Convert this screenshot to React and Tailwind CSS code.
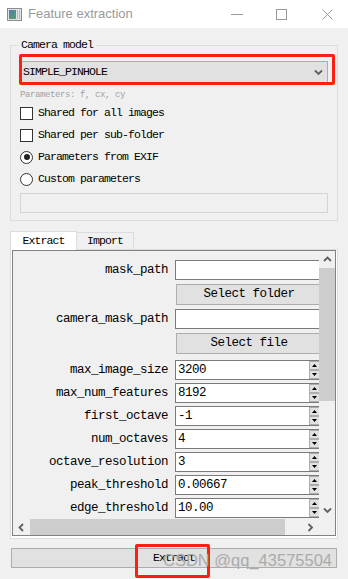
import React from 'react';

const rows = [
  { label: 'max_image_size', value: '3200' },
  { label: 'max_num_features', value: '8192' },
  { label: 'first_octave', value: '-1' },
  { label: 'num_octaves', value: '4' },
  { label: 'octave_resolution', value: '3' },
  { label: 'peak_threshold', value: '0.00667' },
  { label: 'edge_threshold', value: '10.00' },
];

function Chevron({ dir }) {
  const d = {
    up: 'M1 5 L4.5 1.5 L8 5',
    down: 'M1 1.5 L4.5 5 L8 1.5',
    left: 'M5 1 L1.5 4.5 L5 8',
    right: 'M1.5 1 L5 4.5 L1.5 8',
  }[dir];
  const vertical = dir === 'up' || dir === 'down';
  return (
    <svg width={vertical ? 9 : 7} height={vertical ? 7 : 9} viewBox={vertical ? '0 0 9 7' : '0 0 7 9'}>
      <path d={d} fill="none" stroke="#606060" strokeWidth="1.8" />
    </svg>
  );
}

function Tri({ up }) {
  return (
    <svg width="5" height="3" viewBox="0 0 5 3">
      <polygon points={up ? '0,3 2.5,0 5,3' : '0,0 2.5,3 5,0'} fill="#000" />
    </svg>
  );
}

function SpinBox({ value }) {
  return (
    <div className="flex h-[20px] w-[146px] border border-[#7a7a7a] bg-white">
      <div className="flex-1 pl-[2px] leading-[18px]">{value}</div>
      <div className="flex w-[11px] flex-col">
        <div className="flex h-[9px] items-center justify-center border border-[#adadad] bg-[#e1e1e1]">
          <Tri up />
        </div>
        <div className="flex h-[9px] items-center justify-center border border-[#adadad] bg-[#e1e1e1]">
          <Tri />
        </div>
      </div>
    </div>
  );
}

function Row({ label, children, className = '' }) {
  return (
    <div className={`flex items-center ${className}`}>
      <div className="w-[155px] shrink-0 text-right leading-[20px]">{label}</div>
      <div className="ml-[7px] shrink-0">{children}</div>
    </div>
  );
}

function TitleBar() {
  return (
    <div className="flex h-[28px] items-center bg-white font-['Liberation_Sans',Arial,sans-serif] text-[13px] text-[#999999]">
      <svg className="ml-[7px]" width="15" height="13" viewBox="0 0 15 13">
        <defs>
          <linearGradient id="ic" x1="0" y1="0" x2="1" y2="1">
            <stop offset="0" stopColor="#4a7fc0" />
            <stop offset="1" stopColor="#5aa05a" />
          </linearGradient>
        </defs>
        <rect x="0.5" y="0.5" width="14" height="12" fill="#e4e4e4" stroke="#8c8c8c" />
        <rect x="2" y="2" width="7" height="9" fill="url(#ic)" />
        <rect x="10" y="2" width="1" height="9" fill="#b8b8b8" />
        <rect x="12" y="2" width="1" height="9" fill="#b8b8b8" />
      </svg>
      <span className="ml-[6px]">Feature extraction</span>
      <div className="ml-auto flex items-center">
        <svg width="12" height="12" viewBox="0 0 12 12">
          <line x1="0" y1="6.5" x2="12" y2="6.5" stroke="#999" />
        </svg>
        <svg className="ml-[33px]" width="11" height="11" viewBox="0 0 11 11">
          <rect x="0.5" y="0.5" width="10" height="10" fill="none" stroke="#999" />
        </svg>
        <svg className="mr-[15px] ml-[35px]" width="11" height="11" viewBox="0 0 11 11">
          <path d="M0.5 0.5 L10.5 10.5 M10.5 0.5 L0.5 10.5" stroke="#999" />
        </svg>
      </div>
    </div>
  );
}

export default function App() {
  return (
    <div className="relative h-[579px] w-[348px] overflow-hidden bg-[#f0f0f0] font-['Liberation_Mono','DejaVu_Sans_Mono',monospace] text-black">
      <TitleBar />
      <div className="px-[10px]">
        <fieldset className="mt-[11px] border border-[#dcdcdc] px-[9px] pb-[7px]">
          <legend className="-ml-[2px] px-[3px] text-[11.5px] leading-[12px] tracking-[-0.9px]">Camera model</legend>
          <div className="mt-[10px] flex h-[22px] items-center justify-between border border-[#adadad] bg-[#e1e1e1] pl-[2px] pr-[4px] text-[11.5px] tracking-[-0.9px]">
            <span>SIMPLE_PINHOLE</span>
            <Chevron dir="down" />
          </div>
          <div className="mt-[6px] h-[12px] text-[9px] leading-[12px] tracking-[-0.4px] text-[#a0a0a0]">Parameters: f, cx, cy</div>
          <div className="mt-[1px] text-[11.5px] tracking-[-0.9px]">
            <div className="flex h-[22px] items-center gap-[5px]">
              <div className="h-[13px] w-[13px] border border-[#333333] bg-white" />
              <span>Shared for all images</span>
            </div>
            <div className="flex h-[22px] items-center gap-[5px]">
              <div className="h-[13px] w-[13px] border border-[#333333] bg-white" />
              <span>Shared per sub-folder</span>
            </div>
            <div className="flex h-[22px] items-center gap-[5px]">
              <div className="flex h-[13px] w-[13px] items-center justify-center rounded-full border border-[#333333] bg-white">
                <div className="h-[6px] w-[6px] rounded-full bg-[#222222]" />
              </div>
              <span>Parameters from EXIF</span>
            </div>
            <div className="flex h-[22px] items-center gap-[5px]">
              <div className="h-[13px] w-[13px] rounded-full border border-[#333333] bg-white" />
              <span>Custom parameters</span>
            </div>
          </div>
          <div className="mt-[3px] h-[20px] border border-[#d4d4d4] bg-[#f0f0f0]" />
        </fieldset>

        <div className="mt-[10px] flex h-[18px] items-end text-[11.5px] tracking-[-0.9px]">
          <div className="relative z-10 -mb-px flex h-[19px] w-[67px] items-center justify-center border border-b-0 border-[#dcdcdc] bg-white">
            Extract
          </div>
          <div className="flex h-[17px] w-[57px] items-center justify-center border border-l-0 border-b-0 border-[#dcdcdc] bg-[#f0f0f0]">
            Import
          </div>
        </div>

        <div className="h-[290px] border border-[#dcdcdc] bg-white px-[1px] pb-[2px]">
          <div className="flex h-full flex-col border border-[#828282] bg-[#f0f0f0]">
            <div className="flex min-h-0 flex-1">
              <div className="flex-1 overflow-hidden pt-[9px] text-[12.5px] tracking-[-0.5px]">
                <Row label="mask_path">
                  <div className="h-[20px] w-[146px] border border-[#7a7a7a] bg-white" />
                </Row>
                <div className="mt-[4px] ml-[163px] flex h-[21px] w-[146px] items-center justify-center border border-[#adadad] bg-[#e1e1e1]">
                  Select folder
                </div>
                <Row label="camera_mask_path" className="mt-[4px]">
                  <div className="h-[20px] w-[146px] border border-[#7a7a7a] bg-white" />
                </Row>
                <div className="mt-[4px] ml-[163px] flex h-[21px] w-[146px] items-center justify-center border border-[#adadad] bg-[#e1e1e1]">
                  Select file
                </div>
                <div className="mt-[6px] flex flex-col gap-[3px]">
                  {rows.map((r) => (
                    <Row key={r.label} label={r.label}>
                      <SpinBox value={r.value} />
                    </Row>
                  ))}
                </div>
                <div className="mt-[1px] ml-[162px] h-[13px] w-[13px] border border-[#333333] bg-white" />
              </div>
              <div className="flex w-[16px] flex-col bg-[#f0f0f0]">
                <div className="flex h-[17px] items-center justify-center">
                  <Chevron dir="up" />
                </div>
                <div className="h-[133px] bg-[#cdcdcd]" />
                <div className="flex-1" />
                <div className="flex h-[17px] items-center justify-center">
                  <Chevron dir="down" />
                </div>
              </div>
            </div>
            <div className="flex h-[16px]">
              <div className="flex flex-1 bg-[#f0f0f0]">
                <div className="flex w-[17px] items-center justify-center">
                  <Chevron dir="left" />
                </div>
                <div className="w-[255px] bg-[#cdcdcd]" />
                <div className="flex-1" />
                <div className="flex w-[17px] items-center justify-center">
                  <Chevron dir="right" />
                </div>
              </div>
              <div className="w-[16px] bg-[#f0f0f0]" />
            </div>
          </div>
        </div>

        <div className="mx-[1px] mt-[9px] flex h-[20px] items-center justify-center border border-[#adadad] bg-[#e1e1e1] text-[11.5px] tracking-[-0.9px]">
          Extract
        </div>
      </div>

      <div className="pointer-events-none absolute left-[19px] top-[54px] h-[31px] w-[316px] rounded-[2px] border-[3px] border-[#ff1f10]" />
      <div className="pointer-events-none absolute left-[135px] top-[544px] h-[34px] w-[75px] rounded-[2px] border-[3px] border-[#ff1f10]" />
      <div className="pointer-events-none absolute left-[163px] top-[550px] font-['Liberation_Sans',Arial,sans-serif] text-[16.5px] leading-[20px] text-[#ababab]">
        CSDN @qq_43575504
      </div>
    </div>
  );
}
